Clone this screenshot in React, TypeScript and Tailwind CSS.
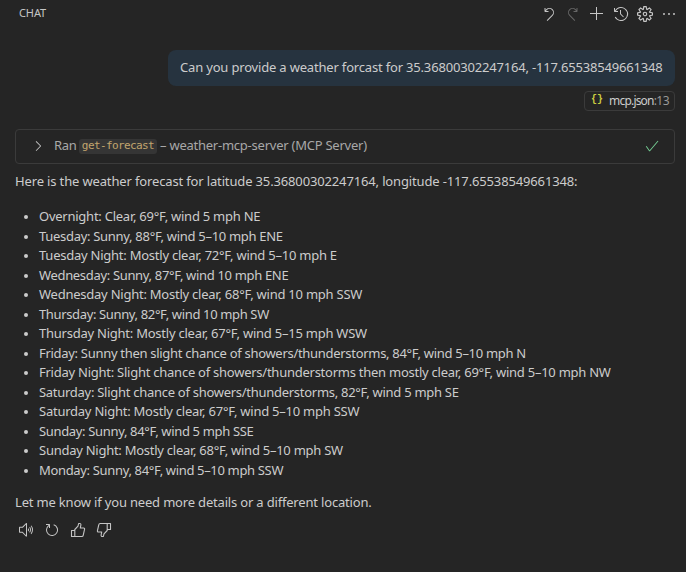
import {
  VscAdd, VscCheck, VscChevronRight, VscDiscard, VscEllipsis, VscHistory,
  VscRefresh, VscRedo, VscSettingsGear, VscUnmute,
} from 'react-icons/vsc';

const forecast: [string, string][] = [
  ['Overnight: Clear, 69°F, wind 5 mph NE', 'tracking-[-0.25px]'],
  ['Tuesday: Sunny, 88°F, wind 5–10 mph ENE', 'tracking-[-0.3px]'],
  ['Tuesday Night: Mostly clear, 72°F, wind 5–10 mph E', 'tracking-[-0.24px]'],
  ['Wednesday: Sunny, 87°F, wind 10 mph ENE', 'tracking-[-0.33px]'],
  ['Wednesday Night: Mostly clear, 68°F, wind 10 mph SSW', 'tracking-[-0.24px]'],
  ['Thursday: Sunny, 82°F, wind 10 mph SW', 'tracking-[-0.36px]'],
  ['Thursday Night: Mostly clear, 67°F, wind 5–15 mph WSW', 'tracking-[-0.24px]'],
  ['Friday: Sunny then slight chance of showers/thunderstorms, 84°F, wind 5–10 mph N', 'tracking-[-0.3px]'],
  ['Friday Night: Slight chance of showers/thunderstorms then mostly clear, 69°F, wind 5–10 mph NW', 'tracking-[-0.25px]'],
  ['Saturday: Slight chance of showers/thunderstorms, 82°F, wind 5 mph SE', 'tracking-[-0.28px]'],
  ['Saturday Night: Mostly clear, 67°F, wind 5–10 mph SSW', 'tracking-[-0.24px]'],
  ['Sunday: Sunny, 84°F, wind 5 mph SSE', 'tracking-[-0.34px]'],
  ['Sunday Night: Mostly clear, 68°F, wind 5–10 mph SW', 'tracking-[-0.26px]'],
  ['Monday: Sunny, 84°F, wind 5–10 mph SSW', 'tracking-[-0.34px]'],
];

function Thumb({ className = '' }: { className?: string }) {
  return (
    <svg viewBox="0 0 16 16" className={`size-4 ${className}`} fill="none" stroke="currentColor" strokeWidth="1.1" strokeLinejoin="round">
      <path d="M4.8 7.5 8 4.2 8.6 1.5h1.1c.8 0 1.3.6 1.2 1.4L10.3 6h3.4c.6 0 1 .5.9 1.1l-1.4 6.2c-.1.7-.7 1.2-1.4 1.2H4.8zM4.8 8.5H1.5v6h3.3" />
    </svg>
  );
}

function Header() {
  return (
    <header className="flex h-7 items-center justify-between pr-[9px] pl-[19px]">
      <h1 className="-mt-[2px] text-[11px] leading-4 tracking-[-0.1px] text-[#c5c5c5]">CHAT</h1>
      <div className="flex items-center gap-2 text-[#c5c5c5]">
        <VscDiscard size={16} />
        <VscRedo size={16} className="text-[#666]" />
        <VscAdd size={16} />
        <VscHistory size={16} />
        <VscSettingsGear size={16} />
        <VscEllipsis size={16} />
      </div>
    </header>
  );
}

function UserRequest() {
  return (
    <section className="mt-[22px] flex flex-col items-end pr-[11px]">
      <div className="flex h-9 w-[507px] items-center rounded-lg bg-[#26333f] pl-3">
        <p className="tracking-[-0.18px]">Can you provide a weather forcast for 35.36800302247164, -117.65538549661348</p>
      </div>
      <div className="mt-[5px] flex h-5 w-[91px] items-center rounded-[4px] border border-[#3b3b3b] pl-[6px] text-[12px]">
        <span className="mb-[2px] w-[18px] font-['Liberation_Mono',monospace] text-[10px] leading-none font-bold text-[#cbcb41]">{'{}'}</span>
        <span className="tracking-[-0.8px]">mcp.json<span className="tracking-[-0.55px] text-[#999]">:13</span></span>
      </div>
    </section>
  );
}

function ToolCall() {
  return (
    <div className="mt-[18px] mr-[11px] ml-[15px] flex h-[35px] items-center rounded-[4px] border border-[#3b3b3b] pr-[14px] pb-px pl-[14px] text-[#a8a8a8]">
      <VscChevronRight size={16} className="text-[#c5c5c5]" />
      <span className="ml-[8px] w-[25px] tracking-[-0.3px]">Ran</span>
      <code className="flex h-[15px] w-[78px] items-center justify-center rounded-[3px] bg-[#353535] font-['DejaVu_Sans_Mono',monospace] text-[11px] tracking-[-0.6px] text-[#c2a56e]">get-forecast</code>
      <span className="ml-[3px] tracking-[-0.24px]">– weather-mcp-server (MCP Server)</span>
      <VscCheck size={16} className="ml-auto text-[#73c991]" />
    </div>
  );
}

export default function App() {
  return (
    <main className="h-[572px] w-[686px] overflow-hidden bg-[#252525] font-['Noto_Sans',sans-serif] text-[13px] leading-[19.5px] whitespace-nowrap text-[#cccccc]">
      <Header />
      <UserRequest />
      <ToolCall />
      <article className="mt-[8px] pl-[15px]">
        <p className="tracking-[-0.145px]">Here is the weather forecast for latitude 35.36800302247164, longitude -117.65538549661348:</p>
        <ul className="mt-[15.8px]">
          {forecast.map(([text, tracking]) => (
            <li key={text} className="flex items-center pl-[9px]">
              <span className="mr-[11px] size-1 rounded-full bg-[#cccccc]" />
              <span className={tracking}>{text}</span>
            </li>
          ))}
        </ul>
        <p className="mt-[12.7px] tracking-[-0.18px]">Let me know if you need more details or a different location.</p>
      </article>
      <div className="mt-[9.5px] flex gap-[10px] pl-[18px] text-[#c5c5c5]">
        <VscUnmute size={16} />
        <VscRefresh size={16} />
        <Thumb />
        <Thumb className="rotate-180" />
      </div>
    </main>
  );
}
